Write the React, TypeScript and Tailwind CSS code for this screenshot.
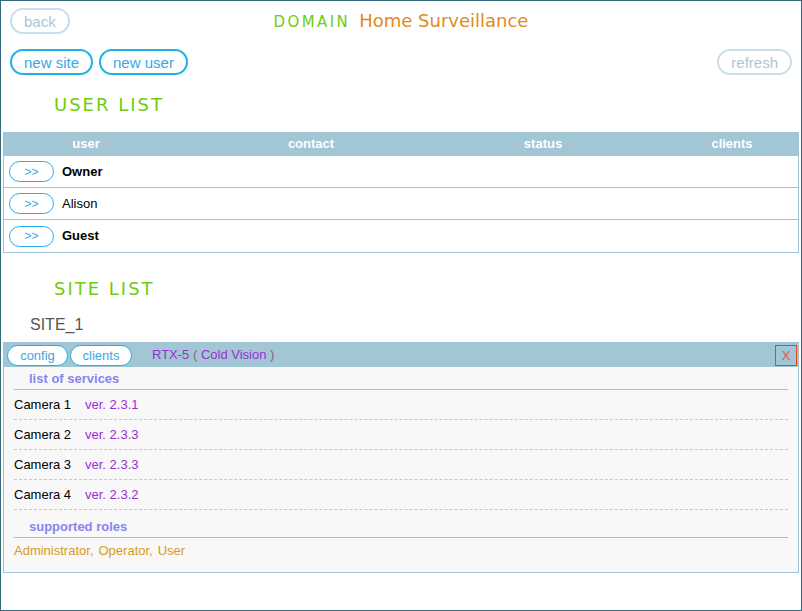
import React from 'react'

const users = [
  { name: 'Owner', bold: true },
  { name: 'Alison', bold: false },
  { name: 'Guest', bold: true },
]

const services = [
  { name: 'Camera 1', ver: 'ver. 2.3.1' },
  { name: 'Camera 2', ver: 'ver. 2.3.3' },
  { name: 'Camera 3', ver: 'ver. 2.3.3' },
  { name: 'Camera 4', ver: 'ver. 2.3.2' },
]

const roles = ['Administrator', 'Operator', 'User']

const verdana = "font-['DejaVu_Sans',Verdana,sans-serif]"

function PillButton({ label, muted }: { label: string; muted?: boolean }) {
  return (
    <button
      className={
        muted
          ? 'flex items-center h-[26px] px-[12px] rounded-full border-2 border-[#c6dfea] text-[15px] leading-none text-[#a9c6d6] bg-white'
          : 'flex items-center h-[26px] px-[12px] rounded-full border-2 border-[#1eb0ea] text-[15px] leading-none text-[#3aa8e0] bg-white'
      }
    >
      {label}
    </button>
  )
}

function SectionTitle({ children }: { children: React.ReactNode }) {
  return (
    <h2 className={`${verdana} pl-[53px] text-[18px] leading-[22px] tracking-[2px] text-[#6fcc11]`}>
      {children}
    </h2>
  )
}

export default function App() {
  return (
    <div className="w-[802px] h-[611px] border border-[#346a7c] bg-white font-['Liberation_Sans',Arial,sans-serif] text-black overflow-hidden">
      {/* Top bar */}
      <div className="grid grid-cols-[1fr_auto_1fr] items-center h-[26px] mt-[7px] px-[9px]">
        <div className="flex">
          <PillButton label="back" muted />
        </div>
        <div className={`${verdana} flex items-baseline gap-[9px] leading-none`}>
          <span className="text-[15px] tracking-[2.4px] text-[#6fcc11]">DOMAIN</span>
          <span className="text-[18px] text-[#e08a1e]">Home Surveillance</span>
        </div>
        <div />
      </div>

      {/* Actions */}
      <div className="flex items-center justify-between px-[9px] mt-[15px]">
        <div className="flex gap-[6px]">
          <PillButton label="new site" />
          <PillButton label="new user" />
        </div>
        <PillButton label="refresh" muted />
      </div>

      <div className="mt-[19px]">
        <SectionTitle>USER LIST</SectionTitle>
      </div>

      {/* User table */}
      <div className="mx-[2px] mt-[16px] border-x border-b border-[#9fc4d6] text-[13px]">
        <div className="grid grid-cols-[164px_286px_178px_1fr] h-[24px] items-center bg-[#a2c6d4] text-white font-bold">
          <div className="text-center">user</div>
          <div className="text-center">contact</div>
          <div className="text-center">status</div>
          <div className="text-center pl-[34px]">clients</div>
        </div>
        {users.map((u, i) => (
          <div
            key={u.name}
            className={`grid grid-cols-[164px_286px_178px_1fr] h-[32px] items-center ${i < users.length - 1 ? 'border-b border-[#9fc4d6]' : ''}`}
          >
            <div className="flex items-center gap-[8px] pl-[5px]">
              <button className="w-[45px] h-[21px] rounded-full border border-[#22aeee] bg-white text-[12px] leading-none text-[#3aa8e0]">
                &gt;&gt;
              </button>
              <span className={u.bold ? 'font-bold' : ''}>{u.name}</span>
            </div>
            <div />
            <div />
            <div />
          </div>
        ))}
      </div>

      <div className="mt-[25px]">
        <SectionTitle>SITE LIST</SectionTitle>
      </div>

      <div className="pl-[29px] mt-[15px] text-[16px] leading-[20px] text-[#555]">SITE_1</div>

      {/* Site panel */}
      <div className="mx-[2px] mt-[7px] border border-[#9fc4d6] text-[13px]">
        <div className="flex items-center h-[24px] bg-[#a2c6d4] pl-[3px] pr-[1px]">
          <button className="h-[21px] w-[61px] rounded-full border border-[#22aeee] bg-white text-[#3aa8e0] leading-none">
            config
          </button>
          <button className="ml-[2px] h-[21px] w-[62px] rounded-full border border-[#22aeee] bg-white text-[#3aa8e0] leading-none">
            clients
          </button>
          <span className="ml-[20px] text-[#9a2fd0]">
            RTX-5 <span className="text-[#7d6a8a]">(</span> Cold Vision{' '}
            <span className="text-[#7d6a8a]">)</span>
          </span>
          <div className="ml-auto flex items-center justify-center w-[22px] h-[21px] border border-[#ee4411] text-[#ee5533] leading-none">
            X
          </div>
        </div>
        <div className="bg-[#f8f8f8] px-[10px] pb-[12px]">
          <div className="pl-[15px] h-[23px] flex items-end pb-[1px] border-b border-[#b4b2f0] font-bold text-[#8a84ee]">
            list of services
          </div>
          {services.map((s) => (
            <div
              key={s.name}
              className="flex items-center h-[30px] border-b border-dashed border-[#c6bff0]"
            >
              <span className="w-[71px]">{s.name}</span>
              <span className="text-[#9a2fd0]">{s.ver}</span>
            </div>
          ))}
          <div className="pl-[15px] h-[28px] flex items-end pb-[1px] border-b border-[#b4b2f0] font-bold text-[#8a84ee]">
            supported roles
          </div>
          <div className="h-[22px] flex items-end text-[#d99a1e]">
            {roles.map((r, i) => (
              <span key={r} className="mr-[5px]">
                {r}
                {i < roles.length - 1 ? ',' : ''}
              </span>
            ))}
          </div>
        </div>
      </div>
    </div>
  )
}
